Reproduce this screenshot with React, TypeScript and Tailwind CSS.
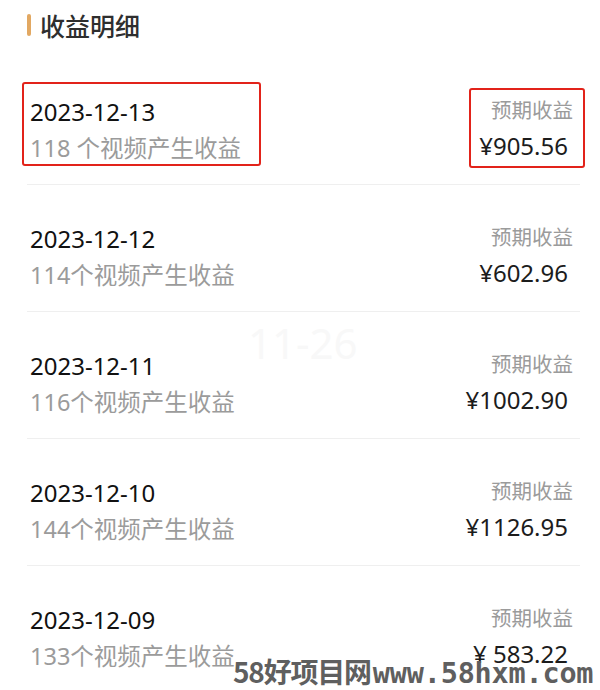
const rows = [
  { date: "2023-12-13", count: "118 个视频产生收益", amount: "¥905.56" },
  { date: "2023-12-12", count: "114个视频产生收益", amount: "¥602.96" },
  { date: "2023-12-11", count: "116个视频产生收益", amount: "¥1002.90" },
  { date: "2023-12-10", count: "144个视频产生收益", amount: "¥1126.95" },
  { date: "2023-12-09", count: "133个视频产生收益", amount: "¥ 583.22" },
];

const font = "font-['Noto_Sans','Noto_Sans_CJK_SC',sans-serif]";

const App = () => {
  return (
    <div className={`relative w-[600px] h-[690px] overflow-hidden bg-white ${font}`}>
      <div className="flex gap-[9px] pl-[27px] pt-[12px] h-[58px] items-start">
        <span className="mt-[2px] w-[4px] h-[22px] rounded-full bg-[#e2a862]" />
        <span className="text-[25px] leading-[28px] font-medium text-[#2e2e2e]">收益明细</span>
      </div>

      <div className="ml-[27px] mr-[20px] flex flex-col">
        {rows.map((r, i) => (
          <div
            key={r.date}
            className={`h-[127px] flex justify-between items-start ${i < rows.length - 1 ? "border-b border-[#efefef]" : ""}`}
          >
            <div className="flex flex-col pt-[40px] pl-[3px]">
              <span className="text-[24px] leading-[28px] text-[#111]">{r.date}</span>
              <span className="mt-[8px] text-[23.5px] leading-[28px] text-[#9b9b9b] whitespace-nowrap">{r.count}</span>
            </div>
            <div className="flex flex-col items-end pt-[40px]">
              <span className="pr-[7px] text-[20.5px] leading-[24px] text-[#9b9b9b]">预期收益</span>
              <span className="mt-[9px] pr-[12px] text-[24px] leading-[30px] text-[#1c1c1c] whitespace-nowrap">{r.amount}</span>
            </div>
          </div>
        ))}
      </div>

      <span className="absolute left-[248px] top-[322px] text-[42px] leading-none text-[#f8f8f8] pointer-events-none">11-26</span>

      <div className="absolute left-[22px] top-[82px] w-[239px] h-[84px] border-2 border-[#e2231a] rounded-[3px]" />
      <div className="absolute left-[469px] top-[88px] w-[116px] h-[80px] border-2 border-[#e2231a] rounded-[3px]" />

      <div className="absolute left-[233px] top-[657px] flex items-baseline whitespace-nowrap leading-none text-[#5f5f5f] font-bold">
        <span className="text-[28px] tracking-[-1.2px] font-['Noto_Sans_CJK_SC',sans-serif]">58好项目网</span>
        <span className="ml-[2px] text-[28.5px] tracking-[-0.2px] font-['DejaVu_Sans_Mono',monospace]">www.58hxm.com</span>
      </div>
    </div>
  );
};

export default App;
